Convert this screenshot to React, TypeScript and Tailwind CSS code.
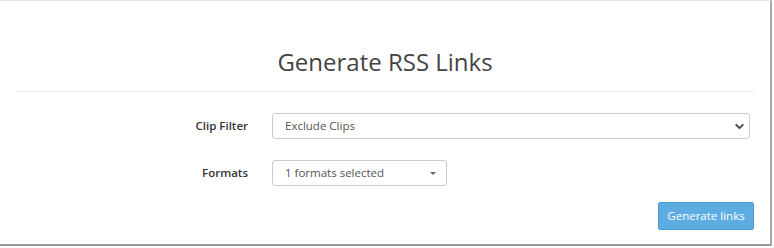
import { ChevronDown } from 'lucide-react';

const FormRow = ({ label, children }: { label: string; children: React.ReactNode }) => (
  <div className="flex items-center">
    <label className="w-[232px] text-right text-[11.5px] font-semibold text-[#333]">{label}</label>
    <div className="ml-[24px] flex-1">{children}</div>
  </div>
);

const App = () => {
  return (
    <div className="h-[248px] w-[774px] bg-white font-['Open_Sans',sans-serif]">
      <div className="h-[246px] w-[772px] border-t border-[#e3e6ea] border-r-2 border-r-[#a9a9a9] border-b-2 border-b-[#9a9a9a] bg-white px-[16px]">
        <h2 className="pt-[45px] pb-[13px] text-center text-[24px] leading-[32px] text-[#444]">
          Generate RSS Links
        </h2>
        <hr className="border-t border-[#eceeef]" />
        <div className="mt-[21px] flex flex-col gap-[21px]">
          <FormRow label="Clip Filter">
            <div className="mr-[4px] flex h-[26px] items-center justify-between rounded-[3px] border border-[#ccc] pl-[12px] pr-[3px] text-[11.5px] text-[#555]">
              <span>Exclude Clips</span>
              <ChevronDown size={13} strokeWidth={3.5} className="text-[#444]" />
            </div>
          </FormRow>
          <FormRow label="Formats">
            <div className="flex h-[26px] w-[175px] items-center justify-between rounded-[3px] border border-[#ccc] pl-[12px] pr-[10px] text-[11.5px] text-[#555]">
              <span>1 formats selected</span>
              <span className="h-0 w-0 border-x-[3.5px] border-t-[3.5px] border-x-transparent border-t-[#666]" />
            </div>
          </FormRow>
        </div>
        <div className="mt-[16px] flex justify-end">
          <button className="h-[28px] w-[96px] rounded-[2px] border border-[#4d9bd2] bg-[#5dade2] text-[11.5px] text-white">
            Generate links
          </button>
        </div>
      </div>
    </div>
  );
};

export default App;
